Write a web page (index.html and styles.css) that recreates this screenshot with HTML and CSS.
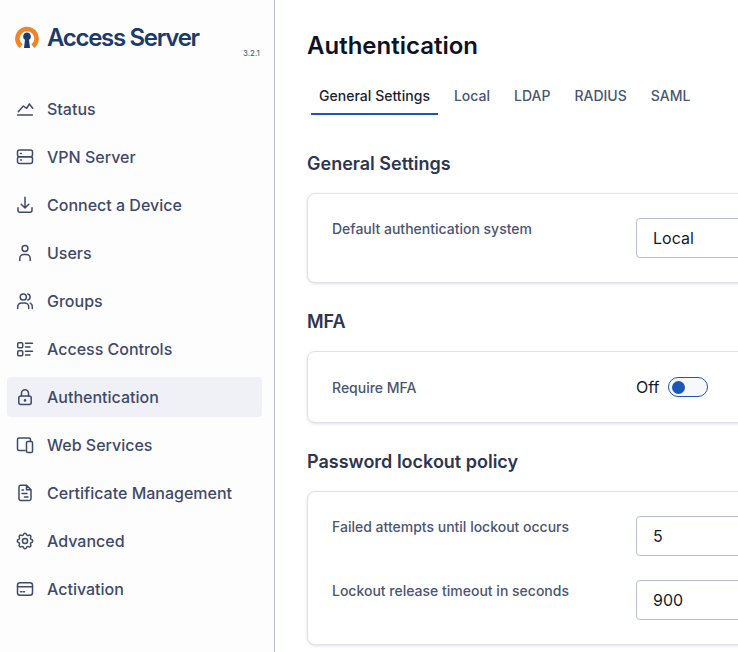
FILE: index.html
```html
<!DOCTYPE html>
<html lang="en">
<head>
  <meta charset="UTF-8">
  <title>Access Server - Authentication</title>
  <link rel="stylesheet" href="styles.css">
</head>
<body>

<aside class="sidebar">
  <div class="brand">
    <svg class="brand-mark" viewBox="0 0 24 24" width="24" height="24">
      <path d="M6.2 21.200a9.600 9.600 0 1 1 11.600 0" fill="none" stroke="#ee8627" stroke-width="4.600"/>
      <path d="M12 7.600a3.900 3.900 0 0 1 2 7.200l1 8.200H9l1-8.200a3.900 3.900 0 0 1 2-7.200z" fill="#1c3a6b"/>
    </svg>
    <span class="brand-name">Access Server</span>
    <span class="brand-version">3.2.1</span>
  </div>

  <nav class="nav">
    <a class="nav-item">
      <svg class="nav-icon" viewBox="0 0 18 18"><path d="M2.300 11.700L7.300 6l3.400 2.300L13.300 4l3.400 4.300M1.700 15h14.600"/></svg>
      Status
    </a>
    <a class="nav-item">
      <svg class="nav-icon" viewBox="0 0 18 18"><rect x="1.500" y="2" width="15" height="6.700" rx="2"/><rect x="1.500" y="8.700" width="15" height="6.700" rx="2"/><path d="M4.500 5.400h.8M4.500 12h.8"/></svg>
      VPN Server
    </a>
    <a class="nav-item">
      <svg class="nav-icon" viewBox="0 0 18 18"><path d="M9 1.300v10.700M5.200 8.200L9 12l3.800-3.800M2 11.800v2.500a2 2 0 0 0 2 2h10a2 2 0 0 0 2-2v-2.500"/></svg>
      Connect a Device
    </a>
    <a class="nav-item">
      <svg class="nav-icon" viewBox="0 0 18 18"><circle cx="9" cy="4.500" r="2.900"/><path d="M3.800 16.500v-2.100a4 4 0 0 1 4-4h2.400a4 4 0 0 1 4 4v2.100"/></svg>
      Users
    </a>
    <a class="nav-item">
      <svg class="nav-icon" viewBox="0 0 18 18"><circle cx="7.300" cy="5" r="3.100"/><path d="M1.700 16.500v-1.600a4 4 0 0 1 4-4h3a4 4 0 0 1 4 4v1.600M11.800 2a3.100 3.100 0 0 1 0 6M14.300 11.200a4 4 0 0 1 2 3.700v1.600"/></svg>
      Groups
    </a>
    <a class="nav-item">
      <svg class="nav-icon" viewBox="0 0 18 18"><rect x="1.700" y="2.800" width="5" height="5" rx="1"/><rect x="1.700" y="10.800" width="5" height="5" rx="1"/><path d="M9.500 3.200h7M9.500 7H14M9.500 11.200h7M9.500 15H14"/></svg>
      Access Controls
    </a>
    <a class="nav-item active">
      <svg class="nav-icon" viewBox="0 0 18 18"><rect x="2.800" y="8" width="12.400" height="8.500" rx="2"/><path d="M5.500 8V5.300a3.500 3.500 0 0 1 7 0V8"/><path class="dot" d="M9 12.300v.1"/></svg>
      Authentication
    </a>
    <a class="nav-item">
      <svg class="nav-icon" viewBox="0 0 18 18"><path d="M9 14.500H3A1.500 1.500 0 0 1 1.500 13V3.500A1.500 1.500 0 0 1 3 2h10a1.500 1.500 0 0 1 1.500 1.500v1.500"/><rect x="10.500" y="5.500" width="6" height="11" rx="1.300"/></svg>
      Web Services
    </a>
    <a class="nav-item">
      <svg class="nav-icon" viewBox="0 0 18 18"><path d="M4.500 1.300h6l4.500 4.500v9a1.700 1.700 0 0 1-1.700 1.700H4.700A1.700 1.700 0 0 1 3 14.800V3a1.700 1.700 0 0 1 1.500-1.700zM10.500 1.300v4.500H15M6 6h1.500M6 9.500h5M8.500 13H12"/></svg>
      Certificate Management
    </a>
    <a class="nav-item">
      <svg class="nav-icon gear" viewBox="1.500 1.500 21 21"><path d="M10.325 4.317c.426 -1.756 2.924 -1.756 3.350 0a1.724 1.724 0 0 0 2.573 1.066c1.543 -.94 3.310 .826 2.370 2.370a1.724 1.724 0 0 0 1.065 2.572c1.756 .426 1.756 2.924 0 3.350a1.724 1.724 0 0 0 -1.066 2.573c.94 1.543 -.826 3.310 -2.370 2.370a1.724 1.724 0 0 0 -2.572 1.065c-.426 1.756 -2.924 1.756 -3.350 0a1.724 1.724 0 0 0 -2.573 -1.066c-1.543 .94 -3.310 -.826 -2.370 -2.370a1.724 1.724 0 0 0 -1.065 -2.572c-1.756 -.426 -1.756 -2.924 0 -3.350a1.724 1.724 0 0 0 1.066 -2.573c-.94 -1.543 .826 -3.310 2.370 -2.370c1 .608 2.296 .07 2.572 -1.065z"/><circle cx="12" cy="12" r="3"/></svg>
      Advanced
    </a>
    <a class="nav-item">
      <svg class="nav-icon" viewBox="0 0 18 18"><rect x="1.500" y="2.700" width="15" height="12.600" rx="2.500"/><path d="M1.500 6.700h15M4.500 11.700h1.200M7.300 11.700h1.200"/></svg>
      Activation
    </a>
  </nav>
</aside>

<main class="content">
  <h1 class="page-title">Authentication</h1>

  <div class="tabs">
    <a class="tab active">General Settings</a>
    <a class="tab">Local</a>
    <a class="tab">LDAP</a>
    <a class="tab">RADIUS</a>
    <a class="tab">SAML</a>
  </div>

  <h2 class="section-title">General Settings</h2>
  <section class="card">
    <div class="field">
      <label class="field-label">Default authentication system</label>
      <div class="input">Local</div>
    </div>
  </section>

  <h2 class="section-title">MFA</h2>
  <section class="card">
    <div class="field field-toggle">
      <label class="field-label">Require MFA</label>
      <div class="toggle-wrap">
        <span class="toggle-text">Off</span>
        <span class="toggle"><span class="toggle-knob"></span></span>
      </div>
    </div>
  </section>

  <h2 class="section-title">Password lockout policy</h2>
  <section class="card">
    <div class="field">
      <label class="field-label">Failed attempts until lockout occurs</label>
      <div class="input">5</div>
    </div>
    <div class="field">
      <label class="field-label">Lockout release timeout in seconds</label>
      <div class="input">900</div>
    </div>
  </section>
</main>

</body>
</html>
```

FILE: styles.css
```css
* {margin:0;padding:0;box-sizing:border-box;}
html, body {
  height: 100%;
  overflow: hidden;
}
body {
  display: flex;
  background: #fff;
  font-family: Inter, "Liberation Sans", sans-serif;
}

.sidebar {
  flex: 0 0 275px;
  background: #fdfdfe;
  border-right: 1px solid #b4bdd2;
  padding: 25px 12px 0 7px;
}
.brand {
  display: flex;
  align-items: center;
  position: relative;
  height: 24px;
  padding-left: 8px;
  margin-bottom: 40px;
}
.brand-mark {
  flex: none;
}
.brand-name {
  margin-left: 8px;
  font-size: 24px;
  font-weight: 600;
  letter-spacing: -1.3px;
  color: #1c3a6b;
}
.brand-version {
  position: absolute;
  left: 236px;
  top: 23px;
  font-size: 8px;
  color: #4a5470;
}

.nav {
  display: flex;
  flex-direction: column;
  gap: 8px;
}
.nav-item {
  display: flex;
  align-items: center;
  gap: 13px;
  height: 40px;
  padding-left: 9px;
  border-radius: 4px;
  font-size: 16px;
  font-weight: 500;
  color: #3f4a6b;
}
.nav-item.active {
  background: #f0f1f6;
}
.nav-icon {
  flex: none;
  width: 18px;
  height: 18px;
  fill: none;
  stroke: #3f4a6b;
  stroke-width: 1.500;
  stroke-linecap: round;
  stroke-linejoin: round;
}
.nav-icon .dot {
  stroke-width: 2.500;
}
.nav-icon.gear {
  stroke-width: 1.750;
}

.content {
  flex: none;
  width: 640px;
  padding: 30px 0 0 32px;
}
.page-title {
  font-size: 24px;
  font-weight: 600;
  line-height: 32px;
  color: #10131f;
}
.tabs {
  display: flex;
  gap: 8px;
  margin-top: 24px;
  padding-left: 4px;
}
.tab {
  padding: 0 8px 7px;
  border-bottom: 2px solid transparent;
  font-size: 14px;
  font-weight: 500;
  line-height: 20px;
  color: #4a5573;
}
.tab.active {
  letter-spacing: 0.03px;
  color: #1a1f33;
  border-bottom-color: #1a56b8;
}

.section-title {
  margin-top: 25px;
  margin-bottom: 15px;
  font-size: 18px;
  font-weight: 600;
  line-height: 28px;
  color: #2d3550;
}
.tabs + .section-title {
  margin-top: 35px;
}
.card {
  display: flex;
  flex-direction: column;
  gap: 24px;
  padding: 24px;
  background: #fff;
  border: 1px solid #dfe2ec;
  border-radius: 8px;
  box-shadow: 0 1px 3px rgba(60, 70, 110, 0.16);
}
.field {
  display: flex;
}
.field-label {
  flex: 0 0 304px;
  padding-top: 1px;
  font-size: 14px;
  font-weight: 500;
  line-height: 20px;
  color: #4a5573;
}
.input {
  flex: 1;
  height: 40px;
  padding: 0 16px;
  border: 1px solid #b4bdd2;
  border-radius: 4px;
  font-size: 16px;
  line-height: 38px;
  color: #161a28;
}
.field-toggle {
  align-items: center;
  height: 22px;
}
.toggle-wrap {
  display: flex;
  align-items: center;
  gap: 9px;
}
.toggle-text {
  font-size: 16px;
  line-height: 20px;
  color: #161a28;
}
.toggle {
  display: flex;
  align-items: center;
  width: 40px;
  height: 20px;
  padding-left: 3px;
  background: #f7f8fb;
  border: 1px solid #1a56b8;
  border-radius: 10px;
}
.toggle-knob {
  width: 13px;
  height: 13px;
  background: #1a56b8;
  border-radius: 50%;
}
```
